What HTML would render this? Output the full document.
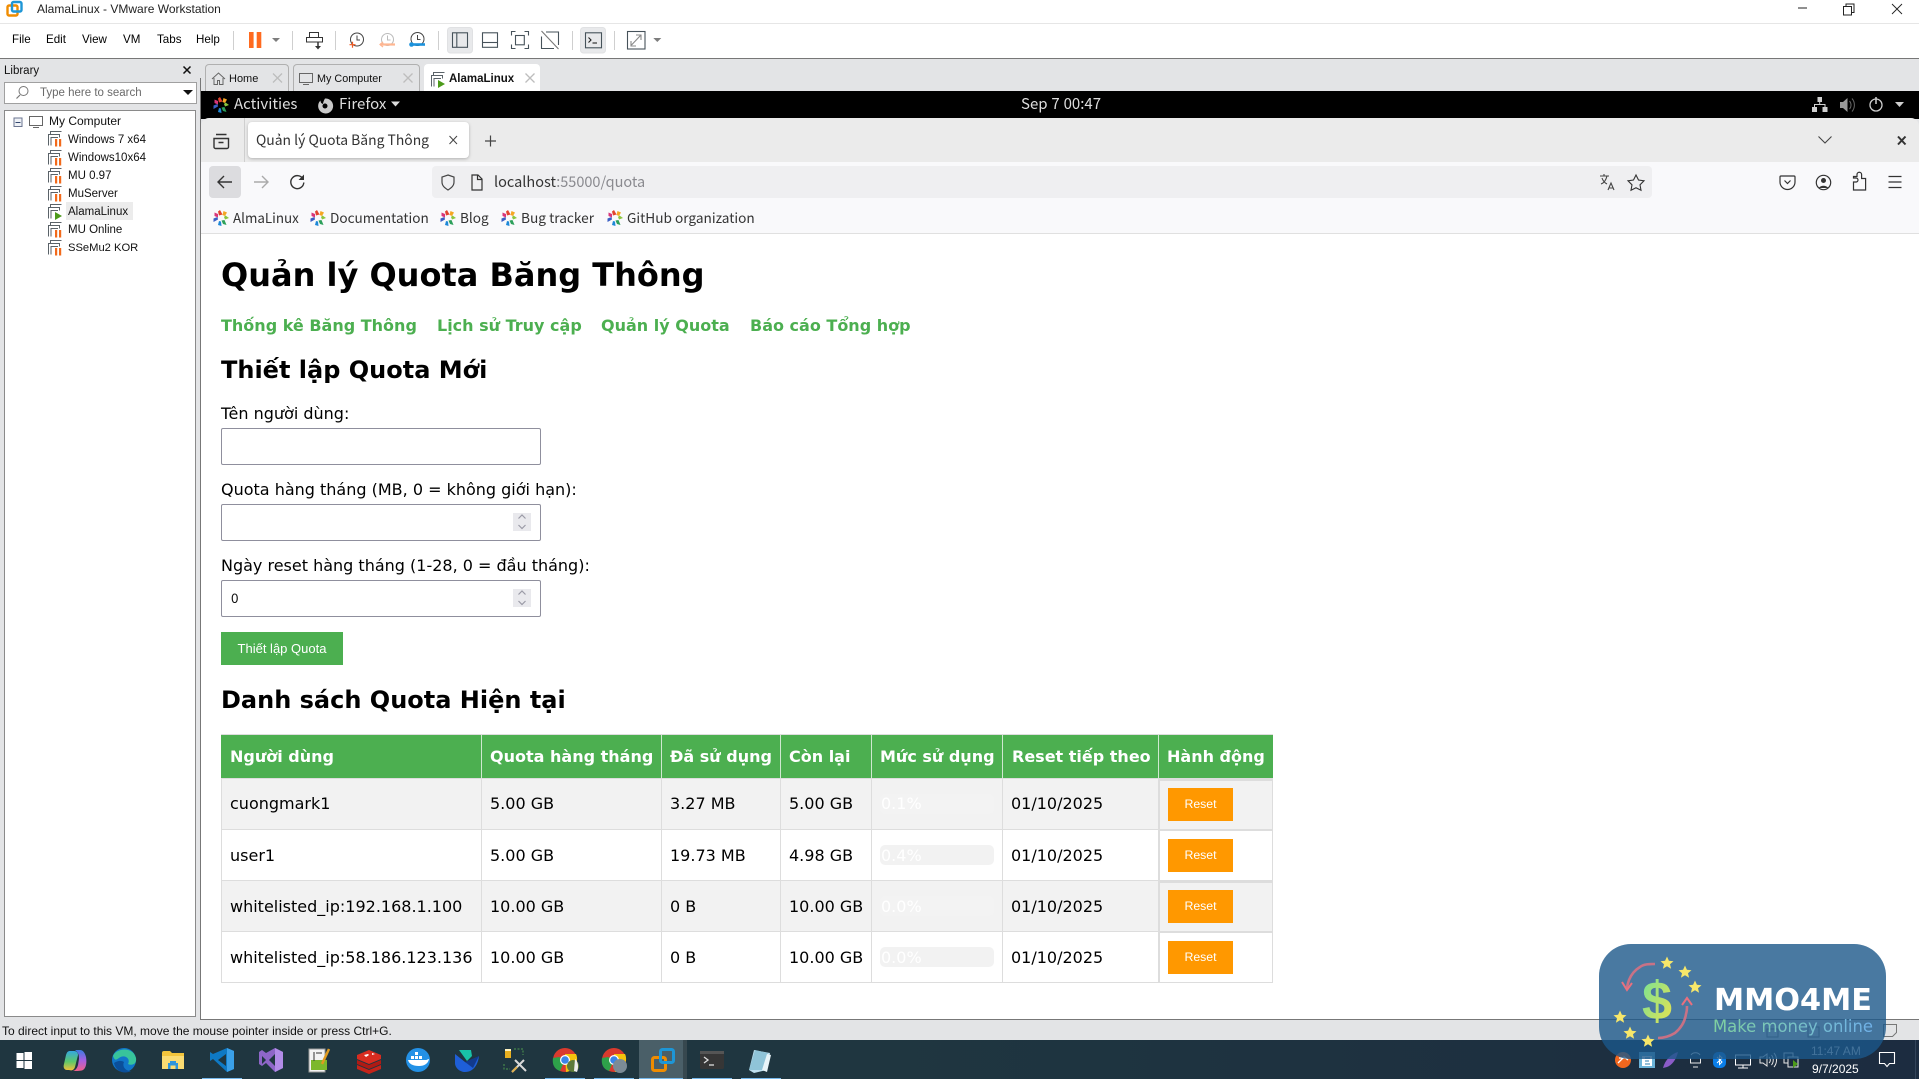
<!DOCTYPE html>
<html><head><meta charset="utf-8"><title>AlamaLinux - VMware Workstation</title>
<style>
html,body{margin:0;padding:0;width:1919px;height:1079px;overflow:hidden;background:#fff}
body{position:relative;font-family:"Liberation Sans",sans-serif}
.r{position:absolute}
.t{position:absolute;white-space:nowrap;line-height:20px;height:20px}
.w{font-size:12px;color:#111;font-family:"Liberation Sans",sans-serif}
.f{font-family:"Noto Sans CJK SC","Liberation Sans",sans-serif;font-size:14px;color:#333}
.d{font-family:"DejaVu Sans","Noto Sans CJK SC",sans-serif;font-size:16px;color:#000}
.b{font-weight:bold}
.g{color:#4CAF50;font-weight:bold}
.h{color:#fff;font-weight:bold}
.btn{position:absolute;background:#FF9800;left:1168px;width:65px;height:33px;color:#fff;font:12.3px/33px "Liberation Sans",sans-serif;text-align:center}
.in{position:absolute;left:221px;width:318px;height:35px;border:1px solid #8f8f9d;border-radius:2px;background:#fff}
.spin{position:absolute;left:513px;width:18px;height:18px;background:#e9e9ed}
</style></head><body>

<!-- window chrome backgrounds -->
<div class="r" style="left:0;top:23px;width:1919px;height:1px;background:#e6e6e6"></div>
<div class="r" style="left:0;top:58px;width:1919px;height:982px;background:#e3e4e6;border-top:1px solid #777;box-sizing:border-box"></div>
<div class="r" style="left:4px;top:82px;width:191px;height:20px;background:#fff;border:1px solid #a0a0a0"></div>
<div class="r" style="left:4px;top:110px;width:190px;height:905px;background:#fff;border:1px solid #8a8a8a"></div>
<div class="r" style="left:66px;top:202px;width:67px;height:18px;background:#ececec"></div>

<!-- tabs -->
<div class="r" style="left:205px;top:64px;width:84px;height:27px;background:#e3e4e6;border:1px solid #b0b0b0;border-bottom:0;box-sizing:border-box;border-radius:4px 4px 0 0"></div>
<div class="r" style="left:293px;top:64px;width:127px;height:27px;background:#e3e4e6;border:1px solid #b0b0b0;border-bottom:0;box-sizing:border-box;border-radius:4px 4px 0 0"></div>
<div class="r" style="left:424px;top:64px;width:116px;height:27px;background:#fff;border-radius:4px 4px 0 0"></div>

<!-- VM area -->
<div class="r" style="left:200px;top:78px;width:1719px;height:942px;border-left:1px solid #777;box-sizing:border-box;background:transparent"></div>
<div class="r" style="left:201px;top:91px;width:1718px;height:28px;background:#000"></div>
<div class="r" style="left:201px;top:118px;width:1718px;height:44px;background:#ebebeb;border-radius:8px 8px 0 0"></div>
<div class="r" style="left:201px;top:162px;width:1718px;height:72px;background:#f9f9fb;border-bottom:1px solid #e0e0e0;box-sizing:border-box"></div>
<div class="r" style="left:201px;top:234px;width:1718px;height:785px;background:#fff"></div>
<div class="r" style="left:200px;top:1019px;width:1719px;height:1px;background:#777"></div>
<div class="r" style="left:244px;top:118px;width:1px;height:44px;background:#cfcfcf"></div>
<div class="r" style="left:248px;top:122px;width:221px;height:36px;background:#fff;border-radius:4px;box-shadow:0 1px 3px rgba(0,0,0,.25)"></div>
<div class="r" style="left:209px;top:166px;width:32px;height:32px;background:#dcdcdf;border-radius:4px"></div>
<div class="r" style="left:432px;top:166px;width:1220px;height:32px;background:#efeff1;border-radius:4px"></div>

<!-- taskbar -->
<div class="r" style="left:0;top:1040px;width:1919px;height:39px;background:linear-gradient(90deg,#1f3640 0,#1f3640 45%,#1c2c40 100%)"></div>
<div class="r" style="left:639px;top:1040px;width:44px;height:39px;background:#4a5f68"></div>
<div class="r" style="left:683px;top:1040px;width:4px;height:39px;background:#37484f"></div>
<div class="r" style="left:202px;top:1078px;width:40px;height:1px;background:#76b9ed"></div>
<div class="r" style="left:545px;top:1078px;width:40px;height:1px;background:#76b9ed"></div>
<div class="r" style="left:594px;top:1078px;width:40px;height:1px;background:#76b9ed"></div>
<div class="r" style="left:639px;top:1078px;width:44px;height:1px;background:#76b9ed"></div>
<div class="r" style="left:692px;top:1078px;width:40px;height:1px;background:#76b9ed"></div>
<div class="r" style="left:741px;top:1078px;width:40px;height:1px;background:#76b9ed"></div>

<!-- page form boxes -->
<div class="in" style="top:428px"></div>
<div class="in" style="top:504px"></div>
<div class="in" style="top:580px"></div>
<div class="spin" style="top:513px"></div>
<div class="spin" style="top:589px"></div>
<div class="r" style="left:221px;top:632px;width:122px;height:33px;background:#4CAF50"></div>

<!-- table -->
<div class="r" style="left:221px;top:734px;width:1052px;height:44px;background:#4CAF50;border-top:1px solid #ddd;box-sizing:border-box"></div>
<div class="r" style="left:221px;top:778px;width:1052px;height:51px;background:#f2f2f2"></div>
<div class="r" style="left:221px;top:829px;width:1052px;height:52px;background:#fff"></div>
<div class="r" style="left:221px;top:880px;width:1052px;height:52px;background:#f2f2f2"></div>
<div class="r" style="left:221px;top:932px;width:1052px;height:51px;background:#fff"></div>
<div class="r" style="left:221px;top:778px;width:1052px;height:1px;background:#ddd"></div>
<div class="r" style="left:221px;top:829px;width:1052px;height:1px;background:#ddd"></div>
<div class="r" style="left:221px;top:880px;width:1052px;height:1px;background:#ddd"></div>
<div class="r" style="left:221px;top:931px;width:1052px;height:1px;background:#ddd"></div>
<div class="r" style="left:221px;top:982px;width:1052px;height:1px;background:#ddd"></div>
<div class="r" style="left:1159px;top:779px;width:114px;height:2px;background:#ddd"></div>
<div class="r" style="left:1159px;top:830px;width:114px;height:1px;background:#ddd"></div>
<div class="r" style="left:1159px;top:881px;width:114px;height:2px;background:#ddd"></div>
<div class="r" style="left:1159px;top:932px;width:114px;height:1px;background:#ddd"></div>
<div class="r" style="left:221px;top:778px;width:1px;height:205px;background:#ddd"></div>
<div class="r" style="left:481px;top:778px;width:1px;height:205px;background:#ddd"></div>
<div class="r" style="left:661px;top:778px;width:1px;height:205px;background:#ddd"></div>
<div class="r" style="left:780px;top:778px;width:1px;height:205px;background:#ddd"></div>
<div class="r" style="left:871px;top:778px;width:1px;height:205px;background:#ddd"></div>
<div class="r" style="left:1002px;top:778px;width:1px;height:205px;background:#ddd"></div>
<div class="r" style="left:1158px;top:778px;width:2px;height:205px;background:#ddd"></div>
<div class="r" style="left:1272px;top:778px;width:1px;height:205px;background:#ddd"></div>
<div class="r" style="left:481px;top:735px;width:1px;height:43px;background:#cfe8d0"></div>
<div class="r" style="left:661px;top:735px;width:1px;height:43px;background:#cfe8d0"></div>
<div class="r" style="left:780px;top:735px;width:1px;height:43px;background:#cfe8d0"></div>
<div class="r" style="left:871px;top:735px;width:1px;height:43px;background:#cfe8d0"></div>
<div class="r" style="left:1002px;top:735px;width:1px;height:43px;background:#cfe8d0"></div>
<div class="r" style="left:1158px;top:735px;width:1px;height:43px;background:#cfe8d0"></div>
<div class="r" style="left:880px;top:794px;width:114px;height:20px;background:#f3f3f3;border-radius:5px"></div>
<div class="r" style="left:880px;top:845px;width:114px;height:20px;background:#f2f2f2;border-radius:5px"></div>
<div class="r" style="left:880px;top:896px;width:114px;height:20px;background:#f3f3f3;border-radius:5px"></div>
<div class="r" style="left:880px;top:947px;width:114px;height:20px;background:#f2f2f2;border-radius:5px"></div>
<div class="btn" style="top:788px">Reset</div>
<div class="btn" style="top:839px">Reset</div>
<div class="btn" style="top:890px">Reset</div>
<div class="btn" style="top:941px">Reset</div>

<!-- all icons -->
<svg class="r" style="left:0;top:0" width="1919" height="1079" viewBox="0 0 1919 1079" fill="none">
<defs>
<g id="alma">
<path d="M7 0l2.500 4.500-3.500 1-1-4z" fill="#e2432e"/><path d="M10.500 1l3.500 1.500-2 3.500-2.500-1z" fill="#f5a623"/>
<path d="M12.500 5.500l3.500 2.500-4 1.500-1-2.500z" fill="#8cc63f"/><path d="M11.500 10l2 5-3.500-1-1.500-3.500z" fill="#2ca05a"/>
<path d="M8 11.500l.5 4.500-3.500-1 1-4z" fill="#1e88d8"/><path d="M5 9.500l-4.500 2.500 0-3.500 4-1.500z" fill="#3b5fc4"/><path d="M1.500 2.500l3.500 1.500 0 3.500-3.500-1.500z" fill="#d9367a"/>
</g>
<g id="vmb" stroke="#5a6268" stroke-width="1" fill="#fff">
<path d="M3.500 4.500v-3h11M1.500 15.500v-11h11v3"/>
<path d="M4 15.500v-8h7"/>
</g>
<g id="vmp"><use href="#vmb"/><rect x="8" y="9" width="2.200" height="7.500" fill="#f26a1b"/><rect x="12" y="9" width="2.200" height="7.500" fill="#f26a1b"/></g>
<g id="vmr"><use href="#vmb"/><path d="M8 9l7 4-7 4z" fill="#4c9a1a"/></g>
<g id="spinb"><path d="M-3.500 2.500L0 -1l3.500 3.500M-3.500 9L0 12.500 3.500 9" stroke="#9a9aa6" stroke-width="1.200"/></g>
<linearGradient id="cp1" x1="0" y1="0" x2="0" y2="1"><stop offset="0" stop-color="#35a7e0"/><stop offset=".55" stop-color="#5cc86a"/><stop offset="1" stop-color="#f2c03a"/></linearGradient>
<linearGradient id="cp2" x1="0" y1="0" x2="0" y2="1"><stop offset="0" stop-color="#3b7be0"/><stop offset=".5" stop-color="#a85fe0"/><stop offset="1" stop-color="#f0608a"/></linearGradient>
</defs>

<!-- vmware title logo -->
<rect x="7.500" y="5.500" width="10" height="10" rx="1.500" stroke="#f08c00" stroke-width="2.400"/>
<rect x="12" y="2" width="9.500" height="9.500" rx="1.500" stroke="#1e96d6" stroke-width="2.400"/>

<!-- window controls -->
<path d="M1798 8h9" stroke="#222" stroke-width="1"/>
<path d="M1843.500 6.500h8v8.500h-8zM1846 6.500v-2.500h8v8.500h-2.500" stroke="#222"/>
<path d="M1892 4l10 10M1902 4l-10 10" stroke="#222" stroke-width=".9"/>

<!-- toolbar -->
<g stroke="#cfcfcf"><path d="M233.500 31v19M292.500 31v19M335.500 31v19M438.500 31v19M572.500 31v19M614.500 31v19"/></g>
<rect x="249" y="32" width="4.600" height="16" fill="#ff6a1f"/><rect x="256.700" y="32" width="4.600" height="16" fill="#ff6a1f"/>
<path d="M272 38h8l-4 4zM653.300 38h8l-4 4z" fill="#7d7d7d"/>
<g stroke="#333" stroke-width="1">
<path d="M309.500 37.500v-5h9v5M306.500 37.500h16v4.500h-16z"/><path d="M318 42v5" stroke-width="1.500"/>
</g>
<path d="M315 46h6l-3 3.500z" fill="#333"/>
<circle cx="357" cy="39.500" r="6.500" stroke="#444"/><path d="M357 35.500v4.500h3" stroke="#444"/>
<path d="M349.500 44.700h6M352.500 41.700v6" stroke="#f05a22" stroke-width="1.200"/>
<circle cx="387.500" cy="39.500" r="6" stroke="#bbb"/><path d="M387.500 35.500v4.500h3" stroke="#bbb"/>
<path d="M380 44.500h15" stroke="#ffb691" stroke-width="2.200"/><path d="M383 42l-3 2.500 3 2.500" stroke="#ffb691" stroke-width="1.200"/>
<circle cx="417.500" cy="39" r="6.500" stroke="#444"/><path d="M417.500 35v4.500h3" stroke="#444"/>
<path d="M410 44.500h15" stroke="#1c92dc" stroke-width="2.600"/><circle cx="411.500" cy="44.500" r="2.300" fill="#1c92dc"/>
<rect x="447.500" y="27.500" width="25" height="25.500" rx="3" fill="#e8e9eb" stroke="#e0e1e3"/>
<rect x="580.500" y="27.500" width="25" height="25.500" rx="3" fill="#e8e9eb" stroke="#e0e1e3"/>
<g stroke="#46525a" stroke-width="1.100">
<rect x="452.500" y="32.800" width="15" height="14.500"/><path d="M456.800 32.800v14.500"/>
<rect x="482.500" y="32.800" width="15" height="14.500"/><path d="M482.500 42.500h15"/>
<path d="M511.500 35.500v-4h4M524.500 31.500h4v4M528.500 44.500v4h-4M515.500 48.500h-4v-4"/><rect x="515.500" y="35.500" width="8.800" height="9.300"/>
<path d="M546 32h12.500v13M554 48.500h-12.500v-12"/><path d="M541.500 31l17 18" stroke="#777"/>
<rect x="585.500" y="32.800" width="16" height="15"/>
<path d="M588.500 37.500l2.500 2.500-2.500 2.500" stroke="#222"/><path d="M592.500 43h4.500" stroke="#222"/>
<rect x="627.500" y="31.500" width="17.500" height="17.500"/><path d="M631.500 45l9-9.500M636 35h5v5M631 41v5h5" stroke="#888"/>
</g>

<!-- library -->
<path d="M183.500 66.500l7 7M190.500 66.500l-7 7" stroke="#111" stroke-width="1.500"/>
<circle cx="23.500" cy="91" r="4.500" stroke="#777"/><path d="M20 95l-3.500 3.500" stroke="#777" stroke-width="1.200"/>
<path d="M183 90h10l-5 5z" fill="#111"/>
<rect x="14" y="118" width="8" height="8.500" fill="#eef1f6" stroke="#6b7590"/><path d="M15.500 122.500h5" stroke="#33476e"/>
<rect x="29.500" y="116.500" width="13" height="9" stroke="#666"/><path d="M33 127.500h6" stroke="#666"/>
<use href="#vmp" x="47" y="130"/><use href="#vmp" x="47" y="149"/><use href="#vmp" x="47" y="167"/>
<use href="#vmp" x="47" y="185"/><use href="#vmr" x="47" y="203"/><use href="#vmp" x="47" y="221"/><use href="#vmp" x="47" y="239"/>

<!-- tab icons -->
<path d="M212 79l6.500-6 6.500 6M214 78v6.500h3.500v-4h2v4h3.500V78" stroke="#666"/>
<rect x="299.500" y="73.500" width="13" height="9" stroke="#666"/><path d="M303 84.500h6" stroke="#666"/>
<use href="#vmr" x="430" y="71"/>
<path d="M273 73.500l9 9M282 73.500l-9 9M403.500 73.500l9 9M412.500 73.500l-9 9M525.500 73.500l9 9M534.500 73.500l-9 9" stroke="#bdbdbd" stroke-width="1.300"/>

<!-- gnome bar -->
<use href="#alma" x="213" y="97"/>
<path d="M325 98.500a7.500 7.500 0 1 1-4.500 2c0 2 1 3 2.500 3.500 .2-2 1-4 2-5.500z" fill="#c9c9c9"/><circle cx="325" cy="106" r="2.500" fill="#000"/>
<path d="M391 101.500h9l-4.500 5z" fill="#ddd"/>
<g fill="#cfcfcf"><rect x="1817.500" y="97" width="4.500" height="5"/><rect x="1812" y="107" width="5" height="5"/><rect x="1822.500" y="107" width="5" height="5"/></g>
<path d="M1819.700 102v3M1814.500 107v-2.500h10.500v2.500" stroke="#cfcfcf"/>
<path d="M1840 102h3l4.500-4v14l-4.500-4h-3z" fill="#999"/><path d="M1849.500 101a6 6 0 0 1 0 8M1852 98.500a10 10 0 0 1 0 13" stroke="#666"/>
<circle cx="1876" cy="105" r="6" stroke="#cfcfcf" stroke-width="1.300"/><path d="M1876 97v7" stroke="#cfcfcf" stroke-width="1.500"/>
<path d="M1895 102h9l-4.500 5z" fill="#cfcfcf"/>

<!-- firefox tab row -->
<path d="M214 138.500h14.500v8.500a1.500 1.500 0 0 1-1.500 1.500h-11.500a1.500 1.500 0 0 1-1.500-1.500zM216 134.500h10.500M218.500 142.500h5" stroke="#333" stroke-width="1.400"/>
<path d="M449.500 136l7.500 8M457 136l-7.500 8" stroke="#444"/>
<path d="M490.500 135.500v11M485 141h11" stroke="#444" stroke-width="1.200"/>
<path d="M1818.500 136.500l6.500 6.500 6.500-6.500" stroke="#444" stroke-width="1.100"/>
<path d="M1898 136.500l7.500 8M1905.500 136.500l-7.500 8" stroke="#333" stroke-width="2"/>

<!-- nav -->
<path d="M218 182h14M224 176l-6 6 6 6" stroke="#333" stroke-width="1.400"/>
<path d="M254 182h14M262 176l6 6-6 6" stroke="#aaa" stroke-width="1.400"/>
<path d="M303 179a6.500 6.500 0 1 0 .800 3.500" stroke="#333" stroke-width="1.400"/><path d="M304 174.500v5.500h-5.500z" fill="#333"/>
<path d="M448 175l6 2v5c0 4-3 6-6 8-3-2-6-4-6-8v-5z" stroke="#444" stroke-width="1.200"/>
<path d="M472 175h6l4 4v11h-10zM477.500 175v4.500h4.500" stroke="#333" stroke-width="1.200"/>
<path d="M1600 176h9M1604 174v2M1607 176c-1 4-3 7-6 8M1602 178c1 3 3 5 5 6M1608 190l3-7 3 7M1609.500 188h3.500" stroke="#444" stroke-width="1.100"/>
<path d="M1636 175l2.500 5 5.500.800-4 4 1 5.500-5-2.600-5 2.600 1-5.500-4-4 5.500-.800z" stroke="#333" stroke-width="1.100"/>
<path d="M1781 176h13a1 1 0 0 1 1 1v5a7.500 7.500 0 0 1-15 0v-5a1 1 0 0 1 1-1zM1784.500 180.500l3 3 3-3" stroke="#333" stroke-width="1.200"/>
<circle cx="1823.500" cy="182.500" r="7.200" stroke="#333" stroke-width="1.200"/><circle cx="1823.500" cy="180.500" r="2.500" fill="#333"/><path d="M1818.500 188a6 5 0 0 1 10 0z" fill="#333"/>
<path d="M1853.500 190v-8h2.500a2 2 0 1 0 0-4h-2.500v-1.500h3.500v-2a2.300 2.300 0 0 1 4.600 0v4h4v11.500z" stroke="#333" stroke-width="1.200"/>
<path d="M1888.500 176.500h13M1888.500 182h13M1888.500 187.500h13" stroke="#333" stroke-width="1.300"/>

<!-- bookmarks -->
<use href="#alma" x="213" y="210"/><use href="#alma" x="310" y="210"/><use href="#alma" x="440" y="210"/><use href="#alma" x="501" y="210"/><use href="#alma" x="607" y="210"/>

<!-- taskbar icons -->
<g fill="#fff"><rect x="16.500" y="1053" width="7" height="7"/><rect x="24.500" y="1052" width="7.500" height="8"/><rect x="16.500" y="1061" width="7" height="7"/><rect x="24.500" y="1061" width="7.500" height="8"/></g>
<path d="M70 1051h4c3 0 4 2 4 4l-3 12c-1 3-3 4-6 3h-2c-3 0-4-3-3-6l2-9c1-3 2-4 4-4z" fill="url(#cp1)"/>
<path d="M75 1050h5c3 0 5 3 6 7 1 6 0 11-3 13-2 1-6 1-10 1 3-1 4-3 5-6l1-6c0-3 0-6-4-9z" fill="url(#cp2)"/>
<circle cx="124" cy="1060" r="12" fill="#1176c9"/><path d="M113 1056c3-8 20-10 23 2 1 6-4 8-8 6 3-6-4-10-9-6-3 2-4 3-6-2z" fill="#38c49b"/><path d="M124 1062c-2 4 1 9 7 9-5 3-15 2-17-8 3-2 7-3 10-1z" fill="#0b4f9a"/>
<path d="M162 1053a2 2 0 0 1 2-2h6l2 2h12v16h-22z" fill="#f3c53c"/><rect x="162" y="1056" width="22" height="13" fill="#fbdc72"/><path d="M168 1069v-6h10v6h-2.500v-3.500h-5v3.500z" fill="#2f96dc"/><rect x="170" y="1061" width="6" height="2" fill="#2f96dc"/>
<path d="M227 1048l7 3v18l-7 3-14-13-3 2v-9l3 2z" fill="#0e79c4"/><path d="M227 1048l7 3v18l-7 3z" fill="#3aa0e8"/><path d="M226 1054l-8 6 8 6z" fill="#1f3640"/>
<path d="M275 1048l8 4v16l-8 4-9-9-4 3-3-2v-12l3-2 4 3z" fill="#8e66c8"/><path d="M275 1054l-6 6 6 6z" fill="#1f3640"/><path d="M262 1056l4 4-4 4z" fill="#1f3640"/><path d="M275 1048l8 4v16l-8 4z" fill="#b28ce8"/>
<path d="M309 1049h16v23h-16z" fill="#f2f2f2" stroke="#999"/><rect x="311" y="1060" width="16" height="10" fill="#7cb82c"/><path d="M314 1052v9M316 1053h6" stroke="#333"/><path d="M322 1064l7-15" stroke="#e09a20" stroke-width="2.500"/>
<path d="M357 1055l12-5 12 5v4l-12 5-12-5z" fill="#d82c20"/><path d="M357 1060v4l12 5 12-5v-4l-12 5z" fill="#b01a14"/><path d="M357 1065v4l12 5 12-5v-4l-12 5z" fill="#c4241a"/><path d="M364 1055l4-1 1 1-3 2zM372 1053l3 1-3 1z" fill="#fff"/>
<circle cx="418" cy="1060" r="12" fill="#2391e6"/><path d="M408 1060h18c1 0 2-1 3-1-1 5-5 7-10 7-6 0-10-2-11-6z" fill="#fff"/><path d="M411 1056h3v3h-3zM415 1056h3v3h-3zM419 1056h3v3h-3zM415 1052h3v3h-3z" fill="#fff"/>
<path d="M455 1054l10 8c4 3 10 0 14-6-1 8-5 16-14 16-5 0-10-4-10-9z" fill="#1e5fd8"/><path d="M459 1050h12l1 6-5 5z" fill="#18c3a8"/><path d="M465 1062l14-6-6 12z" fill="#123a8c"/>
<rect x="505" y="1049" width="6" height="9" fill="#e8b020"/><rect x="505" y="1049" width="6" height="2" fill="#fff3c0"/>
<path d="M514 1049h9v6M504 1064v5h6" stroke="#4e9a4e" stroke-dasharray="2 1.500"/>
<path d="M512 1072l12-12M526 1071l-11-11" stroke="#d9d9d9" stroke-width="2"/><path d="M512 1072l5-5" stroke="#e0b050" stroke-width="2"/>
<circle cx="565" cy="1060" r="12" fill="#d93a2e"/><path d="M565 1060l-5 11c-6-2-8-7-7-13l6-1z" fill="#2ea24a"/><path d="M565 1054h11c2 4 1 9-1 13-1 2-4 4-9 5z" fill="#f4c20d"/><circle cx="565" cy="1060" r="5" fill="#fff"/><circle cx="565" cy="1060" r="3.800" fill="#3a85e8"/>
<circle cx="573" cy="1066" r="6" fill="#5c7a3a"/><path d="M575 1059c3 2 4 8 2 13l-3-1z" fill="#eee"/>
<circle cx="614" cy="1060" r="12" fill="#d93a2e"/><path d="M614 1060l-5 11c-6-2-8-7-7-13l6-1z" fill="#2ea24a"/><path d="M614 1054h11c2 4 1 9-1 13-1 2-4 4-9 5z" fill="#f4c20d"/><circle cx="614" cy="1060" r="5" fill="#fff"/><circle cx="614" cy="1060" r="3.800" fill="#3a85e8"/>
<circle cx="620" cy="1066" r="7" fill="#7c8b96"/>
<rect x="652.500" y="1057.500" width="13" height="13" rx="2" stroke="#f08c00" stroke-width="3"/>
<rect x="660.500" y="1049.500" width="13" height="13" rx="2" stroke="#1e96d6" stroke-width="3"/>
<rect x="700" y="1051" width="24" height="18" rx="1.500" fill="#363636"/><rect x="700" y="1051" width="24" height="3" fill="#555"/><path d="M704 1057l4 3-4 3" stroke="#ddd" stroke-width="1.300"/><path d="M709 1065h5" stroke="#ddd" stroke-width="1.300"/>
<path d="M754 1050l16 3-3 17-13 3-5-3z" fill="#bfe0ef"/><path d="M749 1070l6-20 13 3-5 17z" fill="#8fc4d8"/><path d="M767 1054l4 1-4 17-5-2z" fill="#e8f4f8"/>
<!-- tray -->
<circle cx="1623" cy="1060" r="8" fill="#f0661e"/><path d="M1618 1063l6-6 4 3M1619 1058h7" stroke="#fff" stroke-width="1.300"/>
<rect x="1639" y="1052" width="16" height="16" fill="#6bb3d8"/><rect x="1642" y="1056" width="10" height="10" fill="#fff"/><path d="M1645 1058h5M1645 1061h4M1645 1064h5" stroke="#2a7db0"/>
<path d="M1663 1068c2-8 8-14 15-16-2 8-6 13-11 15z" fill="#8b5cc8"/>
<path d="M1691 1055a5 4 0 0 1 9 0M1690.500 1058v5h10v-5M1693 1067h5" stroke="#e8e8e8"/>
<rect x="1713" y="1052" width="13" height="16" rx="5" fill="#0a7ee8"/><path d="M1717 1057l5 5-2.500 2.500v-9l2.500 2.500-5 5" stroke="#fff"/>
<rect x="1735.500" y="1055" width="15" height="10" stroke="#fff"/><path d="M1743 1065v3M1738 1068h10" stroke="#fff"/>
<path d="M1760 1057h3l4-3v12l-4-3h-3zM1769 1057a4 4 0 0 1 0 6M1771.500 1055a8 8 0 0 1 0 10M1774 1053a11 11 0 0 1 0 14" stroke="#e8e8e8"/>
<rect x="1784" y="1053" width="9" height="10" stroke="#e8e8e8"/><rect x="1788" y="1057" width="10" height="10" stroke="#e8e8e8" fill="#1c2c40"/><path d="M1793 1060l5 4-5 4z" fill="#4c9a1a"/>
<path d="M1879.500 1052.500h15v11h-5l-2.500 3-2.500-3h-5z" stroke="#fff" stroke-width="1.100"/>
<path d="M1915.500 1040v39" stroke="#33445a"/>
<!-- status icons -->
<rect x="1767" y="1029" width="11" height="8" stroke="#888"/><rect x="1808" y="1027" width="11" height="10" stroke="#888"/>
<path d="M1883.500 1024.500h13v8l-4 4h-9z" stroke="#777"/>
<!-- spinners -->
<use href="#spinb" x="522" y="516"/><use href="#spinb" x="522" y="592"/>
</svg>

<!-- text -->
<div class="t w" style="left:37px;top:-1px;font-size:12px;color:#222">AlamaLinux - VMware Workstation</div>
<div class="t w" style="left:12px;top:30px;color:#000;font-size:11.600px">File</div>
<div class="t w" style="left:46px;top:30px;color:#000;font-size:11.600px">Edit</div>
<div class="t w" style="left:82px;top:30px;color:#000;font-size:11.600px">View</div>
<div class="t w" style="left:123px;top:30px;color:#000;font-size:11.600px">VM</div>
<div class="t w" style="left:157px;top:30px;color:#000;font-size:11.600px">Tabs</div>
<div class="t w" style="left:196px;top:30px;color:#000;font-size:11.600px">Help</div>
<div class="t w" style="left:4px;top:61px;font-size:11.500px">Library</div>
<div class="t w" style="left:40px;top:83px;color:#6a6a6a;font-size:11.500px">Type here to search</div>
<div class="t w" style="left:49px;top:111px;font-size:12px">My Computer</div>
<div class="t w" style="left:68px;top:130px;font-size:11.500px">Windows 7 x64</div>
<div class="t w" style="left:68px;top:148px;font-size:11.500px">Windows10x64</div>
<div class="t w" style="left:68px;top:166px;font-size:11.500px">MU 0.97</div>
<div class="t w" style="left:68px;top:184px;font-size:11.500px">MuServer</div>
<div class="t w" style="left:68px;top:202px;font-size:11.500px">AlamaLinux</div>
<div class="t w" style="left:68px;top:220px;font-size:11.500px">MU Online</div>
<div class="t w" style="left:68px;top:238px;font-size:11.200px">SSeMu2 KOR</div>
<div class="t w" style="left:229px;top:69px;font-size:11px">Home</div>
<div class="t w" style="left:317px;top:69px;font-size:10.800px">My Computer</div>
<div class="t w b" style="left:449px;top:69px;font-size:11.500px">AlamaLinux</div>
<div class="t f" style="left:234px;top:94px;color:#ddd;font-size:15px">Activities</div>
<div class="t f" style="left:339px;top:94px;color:#ddd;font-size:15px">Firefox</div>
<div class="t f" style="left:1021px;top:94px;color:#ddd;font-size:15px;word-spacing:.5px">Sep 7 00:47</div>
<div class="t f" style="left:256px;top:130px;font-size:13.900px">Quản lý Quota Băng Thông</div>
<div class="t f" style="left:494px;top:172px;font-size:14.500px"><span style="color:#333">localhost</span><span style="color:#8a8a8f">:55000/quota</span></div>
<div class="t f" style="left:233px;top:207px;font-size:13.400px">AlmaLinux</div>
<div class="t f" style="left:330px;top:207px;font-size:13.600px">Documentation</div>
<div class="t f" style="left:460px;top:207px;font-size:13.600px">Blog</div>
<div class="t f" style="left:521px;top:207px;font-size:13.700px">Bug tracker</div>
<div class="t f" style="left:627px;top:207px;font-size:13.650px">GitHub organization</div>

<div class="t d b" style="left:221px;top:255px;font-size:32px;line-height:40px;height:40px">Quản lý Quota Băng Thông</div>
<div class="t d g" style="left:221px;top:316px">Thống kê Băng Thông</div>
<div class="t d g" style="left:437px;top:316px">Lịch sử Truy cập</div>
<div class="t d g" style="left:601px;top:316px">Quản lý Quota</div>
<div class="t d g" style="left:750px;top:316px">Báo cáo Tổng hợp</div>
<div class="t d b" style="left:221px;top:355px;font-size:24px;line-height:30px;height:30px">Thiết lập Quota Mới</div>
<div class="t d" style="left:221px;top:404px">Tên người dùng:</div>
<div class="t d" style="left:221px;top:480px">Quota hàng tháng (MB, 0 = không giới hạn):</div>
<div class="t d" style="left:221px;top:556px">Ngày reset hàng tháng (1-28, 0 = đầu tháng):</div>
<div class="t f" style="left:231px;top:587px;font-size:13.500px;color:#111">0</div>
<div class="t" style="left:221px;top:639px;width:122px;text-align:center;color:#fff;font-size:13px">Thiết lập Quota</div>
<div class="t d b" style="left:221px;top:685px;font-size:24px;line-height:30px;height:30px">Danh sách Quota Hiện tại</div>

<div class="t d h" style="left:230px;top:747px">Người dùng</div>
<div class="t d h" style="left:490px;top:747px">Quota hàng tháng</div>
<div class="t d h" style="left:670px;top:747px">Đã sử dụng</div>
<div class="t d h" style="left:789px;top:747px">Còn lại</div>
<div class="t d h" style="left:880px;top:747px">Mức sử dụng</div>
<div class="t d h" style="left:1012px;top:747px">Reset tiếp theo</div>
<div class="t d h" style="left:1167px;top:747px">Hành động</div>

<div class="t d" style="left:230px;top:794px">cuongmark1</div>
<div class="t d" style="left:490px;top:794px">5.00 GB</div>
<div class="t d" style="left:670px;top:794px">3.27 MB</div>
<div class="t d" style="left:789px;top:794px">5.00 GB</div>
<div class="t d" style="left:881px;top:794px;color:#fff">0.1%</div>
<div class="t d" style="left:1011px;top:794px">01/10/2025</div>

<div class="t d" style="left:230px;top:846px">user1</div>
<div class="t d" style="left:490px;top:846px">5.00 GB</div>
<div class="t d" style="left:670px;top:846px">19.73 MB</div>
<div class="t d" style="left:789px;top:846px">4.98 GB</div>
<div class="t d" style="left:881px;top:846px;color:#fff">0.4%</div>
<div class="t d" style="left:1011px;top:846px">01/10/2025</div>

<div class="t d" style="left:230px;top:897px">whitelisted_ip:192.168.1.100</div>
<div class="t d" style="left:490px;top:897px">10.00 GB</div>
<div class="t d" style="left:670px;top:897px">0 B</div>
<div class="t d" style="left:789px;top:897px">10.00 GB</div>
<div class="t d" style="left:881px;top:897px;color:#fff">0.0%</div>
<div class="t d" style="left:1011px;top:897px">01/10/2025</div>

<div class="t d" style="left:230px;top:948px">whitelisted_ip:58.186.123.136</div>
<div class="t d" style="left:490px;top:948px">10.00 GB</div>
<div class="t d" style="left:670px;top:948px">0 B</div>
<div class="t d" style="left:789px;top:948px">10.00 GB</div>
<div class="t d" style="left:881px;top:948px;color:#fff">0.0%</div>
<div class="t d" style="left:1011px;top:948px">01/10/2025</div>

<div class="t w" style="left:2px;top:1021px;font-size:12px;color:#111">To direct input to this VM, move the mouse pointer inside or press Ctrl+G.</div>
<div class="t w" style="left:1811px;top:1041px;font-size:12px;color:#ddd">11:47 AM</div>
<div class="t w" style="left:1812px;top:1059px;font-size:12px;color:#fff">9/7/2025</div>

<!-- logo overlay -->
<div class="r" style="left:1599px;top:944px;width:287px;height:115px;border-radius:32px;background:rgba(27,88,138,.8)"></div>
<svg class="r" style="left:0;top:0" width="1919" height="1079" viewBox="0 0 1919 1079" fill="none">
<defs><linearGradient id="dg" x1="0" y1="0" x2="1" y2="1"><stop offset="0" stop-color="#6fe39a"/><stop offset="1" stop-color="#f0e14a"/></linearGradient>
<path id="st" d="M0-6.500l1.900 4.300 4.600.400-3.500 3 1.100 4.600L0 3.300l-4.100 2.500 1.100-4.600-3.500-3 4.600-.400z" fill="#f7e76a"/>
<linearGradient id="mg" x1="0" y1="0" x2="1" y2="0"><stop offset="0" stop-color="#7fd0a0"/><stop offset="1" stop-color="#6fb0e8"/></linearGradient></defs>
<path d="M1655 964c-6 0-11 0-15 3-5 3-9 8-11 13-1 3-2 6-2 9" stroke="#e8707f" stroke-width="2.600" opacity=".8"/><path d="M1622 982l5 8 5-7" stroke="#e8707f" stroke-width="2"/>
<path d="M1658 1038c6 0 12-2 17-5 6-5 10-12 11-19 1-3 1-5 1-8" stroke="#e8707f" stroke-width="2.600" opacity=".8"/><path d="M1682 1005l5-7 5 7" stroke="#e8707f" stroke-width="2"/>
<text x="1657" y="1019" text-anchor="middle" font-family="Liberation Sans" font-weight="bold" font-size="54" fill="url(#dg)">$</text>
<use href="#st" x="1667" y="963"/><use href="#st" x="1685" y="972"/><use href="#st" x="1695" y="987"/>
<use href="#st" x="1620" y="1017"/><use href="#st" x="1630" y="1033"/><use href="#st" x="1648" y="1041"/>
<text x="1714" y="1010" font-family="DejaVu Sans" font-weight="bold" font-size="30" fill="#fff" textLength="158" lengthAdjust="spacingAndGlyphs">MMO4ME</text>
<text x="1713" y="1032" font-family="DejaVu Sans" font-size="17" fill="url(#mg)" textLength="160" lengthAdjust="spacingAndGlyphs">Make money online</text>
</svg>
</body></html>
